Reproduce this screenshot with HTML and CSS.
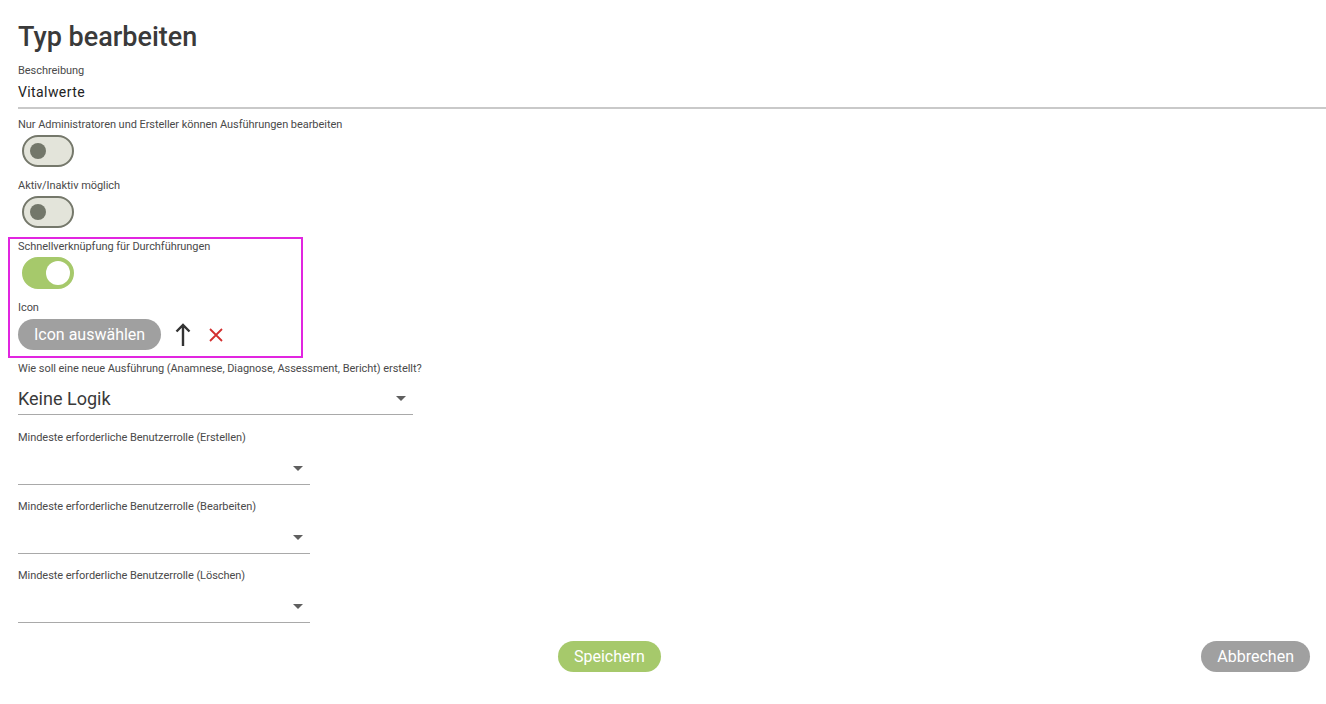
FILE: index.html
```html
<!DOCTYPE html>
<html lang="de">
<head>
  <meta charset="UTF-8" />
  <meta name="viewport" content="width=device-width, initial-scale=1.0" />
  <title>Typ bearbeiten</title>
  <link rel="stylesheet" href="styles.css">
</head>
<body>
  <div class="page">
    <h1>Typ bearbeiten</h1>

    <div class="field-label">Beschreibung</div>
    <div class="text-input">Vitalwerte</div>

    <div class="field-label">Nur Administratoren und Ersteller können Ausführungen bearbeiten</div>
    <div class="toggle"><span class="knob"></span></div>

    <div class="field-label">Aktiv/Inaktiv möglich</div>
    <div class="toggle"><span class="knob"></span></div>

    <div class="highlight">
      <div class="field-label">Schnellverknüpfung für Durchführungen</div>
      <div class="toggle on"><span class="knob"></span></div>

      <div class="field-label">Icon</div>
      <div class="icon-row">
        <button class="pill grey">Icon auswählen</button>
        <svg class="arrow" width="16" height="24" viewBox="0 0 16 24">
          <path d="M8 23V2M1.5 8.5L8 2l6.5 6.5" fill="none" stroke="#333" stroke-width="2.4" />
        </svg>
        <svg class="remove" width="16" height="16" viewBox="0 0 16 16">
          <path d="M2 2l12 12M14 2L2 14" fill="none" stroke="#d32f2f" stroke-width="1.8" />
        </svg>
      </div>
    </div>

    <div class="field-label">Wie soll eine neue Ausführung (Anamnese, Diagnose, Assessment, Bericht) erstellt?</div>
    <div class="select wide">
      <span class="value">Keine Logik</span>
      <span class="caret"></span>
    </div>

    <div class="field-label">Mindeste erforderliche Benutzerrolle (Erstellen)</div>
    <div class="select">
      <span class="value"></span>
      <span class="caret"></span>
    </div>

    <div class="field-label">Mindeste erforderliche Benutzerrolle (Bearbeiten)</div>
    <div class="select">
      <span class="value"></span>
      <span class="caret"></span>
    </div>

    <div class="field-label">Mindeste erforderliche Benutzerrolle (Löschen)</div>
    <div class="select">
      <span class="value"></span>
      <span class="caret"></span>
    </div>

    <div class="actions">
      <button class="pill green">Speichern</button>
      <button class="pill grey">Abbrechen</button>
    </div>
  </div>
</body>
</html>
```

FILE: styles.css
```css
body {
  margin: 0;
  font-family: Roboto, "Noto Sans", Arial, sans-serif;
  color: #3c3c3c;
  background: #fff;
}
.page {
  padding: 0 0 0 18px;
}
h1 {
  margin: 0;
  padding-top: 20px;
  font-size: 27px;
  font-weight: 500;
  line-height: 34px;
  color: #3a3a3a;
  height: 43px;
}
.field-label {
  font-size: 11px;
  line-height: 16px;
  letter-spacing: -0.05px;
  color: #4a4a4a;
}
.text-input {
  font-size: 14px;
  letter-spacing: 0.4px;
  line-height: 20px;
  padding: 3px 0 5px;
  border-bottom: 2px solid #c9c9c9;
  color: #222;
  margin-bottom: 8px;
}
.toggle {
  box-sizing: border-box;
  width: 52px;
  height: 32px;
  margin: 2px 0 11px 4px;
  border: 2px solid #75786b;
  border-radius: 16px;
  background: #e3e4da;
  display: flex;
  align-items: center;
  padding-left: 6px;
}
.knob {
  width: 16px;
  height: 16px;
  border-radius: 50%;
  background: #73776a;
}
.toggle.on {
  border-color: #a6c96b;
  background: #a6c96b;
  justify-content: flex-end;
  padding: 0 2px 0 0;
}
.toggle.on .knob {
  width: 24px;
  height: 24px;
  background: #fff;
}
.highlight {
  margin: -2px 0 3px -10px;
  padding: 0 0 6px 8px;
  border: 2px solid #e125e0;
  width: 283px;
}
.icon-row {
  display: flex;
  align-items: center;
  margin-top: 3px;
}
.pill {
  border: none;
  border-radius: 16px;
  height: 31px;
  padding: 0 16px;
  font-family: Roboto, "Noto Sans", Arial, sans-serif;
  font-size: 16px;
  color: #fff;
  cursor: pointer;
}
.pill.grey {
  background: #a0a0a0;
}
.pill.green {
  background: #a6c96b;
}
.arrow {
  margin-left: 14px;
  margin-top: 1px;
}
.remove {
  margin-left: 17px;
  margin-top: 1px;
}
.select {
  width: 292px;
  height: 38px;
  border-bottom: 1px solid #a9a9a9;
  display: flex;
  align-items: flex-end;
  justify-content: space-between;
  margin: 0 0 14px;
}
.select.wide {
  width: 395px;
  height: 37px;
  margin-bottom: 15px;
}
.select .value {
  font-size: 18px;
  line-height: 24px;
  color: #3a3a3a;
  padding-bottom: 3px;
}
.caret {
  width: 0;
  height: 0;
  border-left: 5px solid transparent;
  border-right: 5px solid transparent;
  border-top: 5px solid #5f5f5f;
  margin: 0 7px 13px 0;
}
.actions {
  display: flex;
  justify-content: space-between;
  padding: 4px 16px 0 540px;
}
```
